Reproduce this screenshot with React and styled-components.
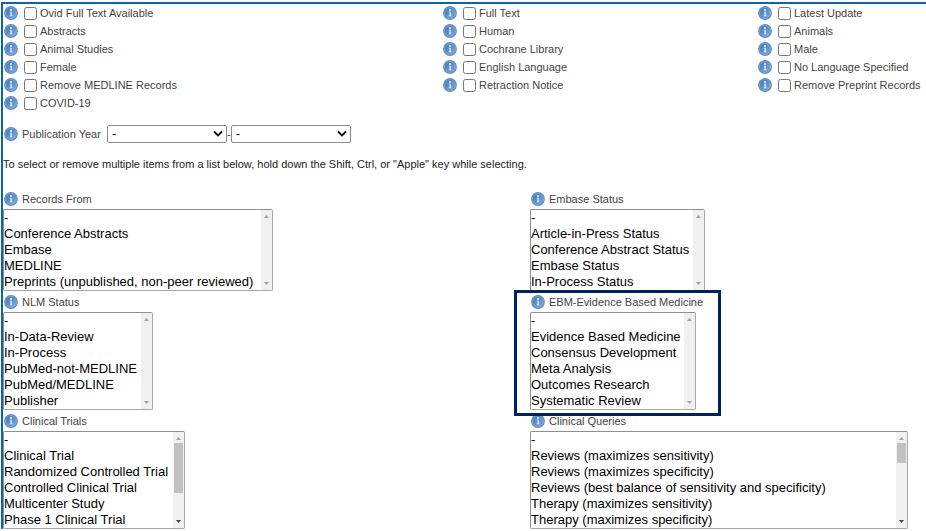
import React, { useId } from "react";
import styled, { createGlobalStyle } from "styled-components";

const GlobalStyle = createGlobalStyle`
  *, *::before, *::after { box-sizing: border-box; }
  body {
    margin: 0;
    background: #fff;
    color: #444;
    font: 11px/18px "Liberation Sans", Arial, sans-serif;
    overflow-x: hidden;
  }
`;

const Panel = styled.main`
  margin: 2px 0 0 1px;
  border-top: 2px solid #0b65a8;
  border-left: 2px solid #0b65a8;
`;

const LimitGrid = styled.div`
  display: grid;
  grid-template-columns: 439fr 315fr 168fr;
  padding-left: 1px;
`;

const LimitColumn = styled.div`
  display: flex;
  flex-direction: column;
  min-width: 0;
`;

const LimitRow = styled.div`
  display: flex;
  align-items: center;
  height: 18px;
  white-space: nowrap;
`;

const CheckLabel = styled.label`
  display: flex;
  align-items: center;
  gap: 3px;
  margin-left: 6px;
`;

const Checkbox = styled.input`
  width: 13px;
  height: 13px;
  margin: 0;
`;

const InfoButton = styled.button`
  display: flex;
  flex: none;
  padding: 0;
  border: 0;
  background: none;
  cursor: pointer;
`;

const YearRow = styled.div`
  display: flex;
  align-items: center;
  height: 18px;
  margin-top: 13px;
  padding-left: 1px;
`;

const YearLabel = styled.label`
  margin: 0 3px 0 4px;
  width: 82px;
  white-space: nowrap;
`;

const YearSelectWrap = styled.span`
  position: relative;
  display: flex;
`;

const YearSelect = styled.select`
  appearance: none;
  width: 120px;
  height: 18px;
  padding: 0 4px;
  border: 1px solid #8c8c8c;
  border-radius: 2px;
  background: #fff;
  color: #000;
  font: 13px/16px "Liberation Sans", Arial, sans-serif;
`;

const Chevron = styled.svg`
  position: absolute;
  right: 4px;
  top: 5px;
  pointer-events: none;
`;

const Hint = styled.p`
  margin: 12px 0 15px;
  color: #222;
`;

const FieldGrid = styled.div`
  display: grid;
  grid-template-columns: 527fr 396fr;
`;

const Field = styled.div`
  position: relative;
  min-width: 0;
`;

const FieldHeading = styled.div`
  display: flex;
  align-items: center;
  gap: 4px;
  height: 21px;
  padding-left: 1px;
`;

const ListFrame = styled.div`
  display: flex;
  width: ${(p) => p.$width}px;
  max-width: 100%;
  border: 1px solid #8f8f8f;
  border-right-color: #a8a8a8;
  border-bottom-color: #a8a8a8;
  border-radius: 2px;
  overflow: hidden;
`;

const ListBox = styled.select`
  flex: 1;
  min-width: 0;
  height: ${(p) => p.$rows * 16}px;
  padding: 0;
  border: 0;
  outline: 0;
  background: #fff;
  color: #000;
  font: 13px/16px "Liberation Sans", Arial, sans-serif;
  overflow: hidden;
  scrollbar-width: none;
`;

const ListOption = styled.option`
  height: 16px;
  min-height: 0;
  padding: 0;
  line-height: 16px;
`;

const ScrollTrack = styled.div`
  display: flex;
  flex-direction: column;
  align-items: center;
  flex: none;
  width: 11px;
  padding: 5px 0;
  background: #f0f0f0;
`;

const Thumb = styled.div`
  width: 9px;
  height: ${(p) => p.$size}px;
  margin-top: 3px;
  background: #c1c1c1;
`;

const Arrow = styled.svg`
  flex: none;
  margin-top: ${(p) => (p.$end ? "auto" : "0")};
`;

const Highlight = styled.div`
  position: absolute;
  left: -16px;
  top: -1px;
  width: 207px;
  height: 126px;
  border: 3px solid #002060;
  pointer-events: none;
  z-index: 1;
`;

function Info({ topic }) {
  const id = useId();
  return (
    <InfoButton type="button" aria-label={`About ${topic}`}>
      <svg width="14" height="14" viewBox="0 0 14 14" aria-hidden="true">
        <defs>
          <linearGradient id={id} x1="0" y1="0" x2="1" y2="1">
            <stop offset="0" stopColor="#4878b4" />
            <stop offset="0.5" stopColor="#5f90c9" />
            <stop offset="1" stopColor="#86b1e0" />
          </linearGradient>
        </defs>
        <circle cx="7" cy="7" r="6.9" fill="#5d8bc0" />
        <circle cx="7" cy="7" r="5.6" fill={`url(#${id})`} stroke="#83aada" strokeWidth="0.6" />
        <circle cx="7" cy="4" r="0.9" fill="#fff" />
        <path d="M5.9 5.8h1.8v3.7h.6v.8H5.8v-.8h.7V6.5h-.6z" fill="#f2f7fc" />
      </svg>
    </InfoButton>
  );
}

function Limit({ name }) {
  return (
    <LimitRow>
      <Info topic={name} />
      <CheckLabel>
        <Checkbox type="checkbox" />
        {name}
      </CheckLabel>
    </LimitRow>
  );
}

function Year({ id, label }) {
  return (
    <YearSelectWrap>
      <YearSelect id={id} aria-label={label}>
        <option>-</option>
      </YearSelect>
      <Chevron width="10" height="8" viewBox="0 0 10 8" aria-hidden="true">
        <path d="M1 1.5l4 4 4-4" fill="none" stroke="#111" strokeWidth="1.8" />
      </Chevron>
    </YearSelectWrap>
  );
}

function ListField({ name, options, width, thumb, highlighted }) {
  const id = useId();
  return (
    <Field>
      <FieldHeading>
        <Info topic={name} />
        <label htmlFor={id}>{name}</label>
      </FieldHeading>
      <ListFrame $width={width}>
        <ListBox id={id} multiple size={options.length} $rows={options.length}>
          {options.map((o) => (
            <ListOption key={o}>{o}</ListOption>
          ))}
        </ListBox>
        <ScrollTrack aria-hidden="true">
          <Arrow width="5" height="3" viewBox="0 0 5 3">
            <path d="M0 3L2.5 0 5 3z" fill="#a0a0a0" />
          </Arrow>
          {thumb && <Thumb $size={thumb} />}
          <Arrow $end width="5" height="3" viewBox="0 0 5 3">
            <path d="M0 0L2.5 3 5 0z" fill={thumb ? "#444" : "#a0a0a0"} />
          </Arrow>
        </ScrollTrack>
      </ListFrame>
      {highlighted && <Highlight />}
    </Field>
  );
}

const limits = [
  ["Ovid Full Text Available", "Abstracts", "Animal Studies", "Female", "Remove MEDLINE Records", "COVID-19"],
  ["Full Text", "Human", "Cochrane Library", "English Language", "Retraction Notice"],
  ["Latest Update", "Animals", "Male", "No Language Specified", "Remove Preprint Records"],
];

const fields = [
  {
    name: "Records From",
    width: 270,
    options: ["-", "Conference Abstracts", "Embase", "MEDLINE", "Preprints (unpublished, non-peer reviewed)"],
  },
  {
    name: "Embase Status",
    width: 175,
    options: ["-", "Article-in-Press Status", "Conference Abstract Status", "Embase Status", "In-Process Status"],
  },
  {
    name: "NLM Status",
    width: 150,
    options: ["-", "In-Data-Review", "In-Process", "PubMed-not-MEDLINE", "PubMed/MEDLINE", "Publisher"],
  },
  {
    name: "EBM-Evidence Based Medicine",
    width: 166,
    highlighted: true,
    options: [
      "-",
      "Evidence Based Medicine",
      "Consensus Development",
      "Meta Analysis",
      "Outcomes Research",
      "Systematic Review",
    ],
  },
  {
    name: "Clinical Trials",
    width: 182,
    thumb: 50,
    options: [
      "-",
      "Clinical Trial",
      "Randomized Controlled Trial",
      "Controlled Clinical Trial",
      "Multicenter Study",
      "Phase 1 Clinical Trial",
    ],
  },
  {
    name: "Clinical Queries",
    width: 378,
    thumb: 20,
    options: [
      "-",
      "Reviews (maximizes sensitivity)",
      "Reviews (maximizes specificity)",
      "Reviews (best balance of sensitivity and specificity)",
      "Therapy (maximizes sensitivity)",
      "Therapy (maximizes specificity)",
    ],
  },
];

export default function App() {
  return (
    <>
      <GlobalStyle />
      <Panel>
        <LimitGrid>
          {limits.map((column) => (
            <LimitColumn key={column[0]}>
              {column.map((name) => (
                <Limit key={name} name={name} />
              ))}
            </LimitColumn>
          ))}
        </LimitGrid>
        <YearRow>
          <Info topic="Publication Year" />
          <YearLabel htmlFor="year-from">Publication Year</YearLabel>
          <Year id="year-from" />
          <span>-</span>
          <Year id="year-to" label="Publication Year end" />
        </YearRow>
        <Hint>
          To select or remove multiple items from a list below, hold down the Shift, Ctrl, or "Apple" key while
          selecting.
        </Hint>
        <FieldGrid>
          {fields.map((field) => (
            <ListField key={field.name} {...field} />
          ))}
        </FieldGrid>
      </Panel>
    </>
  );
}
